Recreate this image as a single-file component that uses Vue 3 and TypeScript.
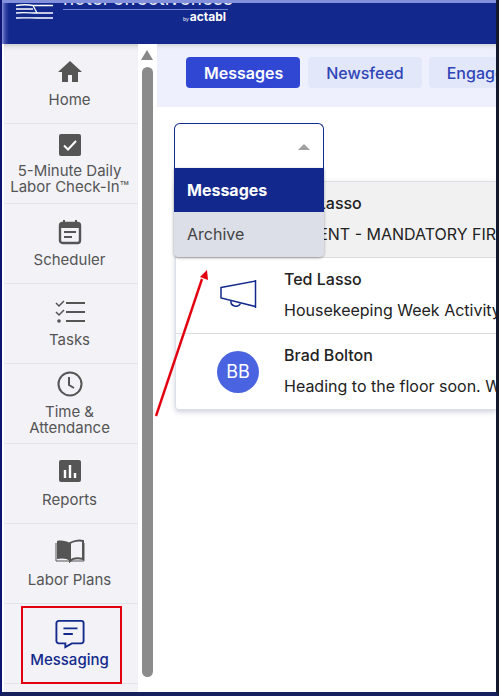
<script setup lang="ts">
interface Row {
  name: string;
  text: string;
  kind: string;
}

const rows: Row[] = [
  { name: "Ted Lasso", text: "URGENT - MANDATORY FIRE DRILL TODAY", kind: "none" },
  { name: "Ted Lasso", text: "Housekeeping Week Activity Schedule", kind: "horn" },
  { name: "Brad Bolton", text: "Heading to the floor soon. Who needs help?", kind: "avatar" },
];

const tabs = ["Messages", "Newsfeed", "Engagement"];
</script>

<template>
  <div class="frame">
    <header class="top">
      <div class="flag">
        <svg width="38" height="16" viewBox="0 0 38 16">
          <path d="M0 1.500c6-1 12-1 17 0h20M0 5h17M0 9c8-1 14 0 21 0h16M0 14c8-.500 14 0 21 0h16M17 1.500 21 9" fill="none" stroke="#fff" stroke-width="1.300" />
        </svg>
      </div>
      <div class="brand">
        <div class="brand-name">hotel effectiveness</div>
        <div class="brand-by"><small>by</small>actabl</div>
      </div>
    </header>

    <div class="body">
      <nav class="side">
        <a class="item tall">
          <svg width="26" height="24" viewBox="0 0 26 24"><path d="M13 2 1 13h4v10h6v-7h4v7h6V13h4z" fill="#555" /></svg>
          <span>Home</span>
        </a>
        <a class="item check">
          <svg width="24" height="24" viewBox="0 0 24 24"><rect x="1" y="1" width="22" height="22" rx="2" fill="#555" /><path d="m6 12.5 4 4 8-8.500" fill="none" stroke="#fff" stroke-width="2" /></svg>
          <span>5-Minute Daily<br />Labor Check-In™</span>
        </a>
        <a class="item">
          <svg width="24" height="26" viewBox="0 0 24 26"><path d="M6 1v3M18 1v3" stroke="#555" stroke-width="2" /><rect x="2" y="4" width="20" height="20" rx="2.500" fill="none" stroke="#555" stroke-width="2.400" /><rect x="2" y="4" width="20" height="5" fill="#555" /><path d="M6 13h12M6 18h8" stroke="#555" stroke-width="2" /></svg>
          <span>Scheduler</span>
        </a>
        <a class="item">
          <svg width="32" height="26" viewBox="0 0 32 26"><path d="m2 4 3 3 5-5M2 13l3 3 5-5" fill="none" stroke="#555" stroke-width="1.500" /><circle cx="5" cy="22" r="1.800" fill="#555" /><path d="M12 4h19M12 13h19M12 22h19" stroke="#555" stroke-width="2" /></svg>
          <span>Tasks</span>
        </a>
        <a class="item">
          <svg width="26" height="26" viewBox="0 0 26 26"><circle cx="13" cy="13" r="11.500" fill="none" stroke="#555" stroke-width="2" /><path d="M12 6v8l5 3" fill="none" stroke="#555" stroke-width="2" /></svg>
          <span>Time &amp;<br />Attendance</span>
        </a>
        <a class="item tall">
          <svg width="24" height="24" viewBox="0 0 24 24"><rect x="1" y="1" width="22" height="22" rx="2" fill="#555" /><path d="M7 11v8M12 6v13M17 14v5" stroke="#fff" stroke-width="2.400" /></svg>
          <span>Reports</span>
        </a>
        <a class="item tall">
          <svg width="30" height="24" viewBox="0 0 30 24"><path d="M15 4C12 2 6 1 2 2v18c4-1 10-1 13 2z" fill="#555" /><path d="M15 4c3-2 9-3 13-2v18c-4-1-10-1-13 2z" fill="none" stroke="#555" stroke-width="2" /><path d="M1 4v18h28V4" fill="none" stroke="#555" stroke-width="1" /></svg>
          <span>Labor Plans</span>
        </a>
        <a class="item active">
          <svg width="30" height="30" viewBox="0 0 32 32"><path d="M4 2h24a2.500 2.500 0 0 1 2.500 2.500v19a2.500 2.500 0 0 1-2.500 2.500H18l-7 4v-4H4a2.500 2.500 0 0 1-2.500-2.500v-19A2.500 2.500 0 0 1 4 2z" fill="none" stroke="#132a8c" stroke-width="2" /><path d="M9 10h15M9 16h10" stroke="#132a8c" stroke-width="2" /></svg>
          <span>Messaging</span>
        </a>
      </nav>

      <div class="scroll">
        <div class="arrow"></div>
        <div class="thumb"></div>
      </div>

      <main class="main">
        <div class="tabs">
          <button v-for="(t, i) in tabs" :key="t" class="tab" :class="{ on: i === 0 }">{{ t }}</button>
        </div>

        <div class="content">
          <div class="select">
            <i class="caret"></i>
            <div class="menu">
              <div class="opt sel">Messages</div>
              <div class="opt">Archive</div>
            </div>
          </div>

          <div class="card">
            <div v-for="r in rows" :key="r.text" class="row" :class="{ first: r.kind === 'none' }">
              <div class="pic">
                <svg v-if="r.kind === 'horn'" width="37" height="28" viewBox="0 0 37 28">
                  <path d="M1 7.500 35.500 1v25.500L1 18zM35.500 0v28" fill="none" stroke="#132a8c" stroke-width="1.500" />
                  <path d="M11 21a5 4.500 0 0 0 9.500 2.500" fill="none" stroke="#132a8c" stroke-width="1.500" />
                </svg>
                <div v-if="r.kind === 'avatar'" class="avatar">BB</div>
              </div>
              <div class="txt">
                <div class="who">{{ r.name }}</div>
                <div class="msg">{{ r.text }}</div>
              </div>
            </div>
          </div>
        </div>
      </main>
    </div>

    <!-- red annotation marks -->
    <svg class="mark-arrow" width="60" height="150" viewBox="0 0 60 150">
      <path d="M4 146 50 9" stroke="#e3000f" stroke-width="2.400" fill="none" />
      <path d="M55 0 48 7l8 3z" fill="#e3000f" />
    </svg>
    <div class="mark-box"></div>
  </div>
</template>

<style>
html,
body {
  margin: 0;
  background: #fff;
}
</style>

<style scoped>
.frame {
  position: relative;
  width: 499px;
  height: 696px;
  overflow: hidden;
  box-sizing: border-box;
  display: flex;
  flex-direction: column;
  font-family: Inter, "Liberation Sans", sans-serif;
  background: #fff;
  border-left: 2px solid #0e1572;
  border-right: 3px solid #16182c;
  border-bottom: 4px solid #16205f;
}
.top {
  height: 44px;
  flex: none;
  box-sizing: border-box;
  background: linear-gradient(90deg, #8391dc 0, #3a4aa8 3px, #12288c 7px);
  border-top: 3px solid #8391dc;
  display: flex;
  padding-left: 14px;
  overflow: hidden;
  position: relative;
  z-index: 2;
}
.flag {
  height: 16px;
  margin-top: 1px;
}
.brand {
  margin-left: 9px;
  width: 165px;
  color: #fff;
  margin-top: -15px;
}
.brand-name {
  font-size: 19px;
  line-height: 21px;
  height: 21px;
  white-space: nowrap;
  border-bottom: 1px solid #8391dc;
  text-align: center;
  opacity: 0.9;
}
.brand-by {
  text-align: right;
  font-size: 12px;
  font-weight: 700;
  line-height: 14px;
  padding-right: 2px;
}
.brand-by small {
  font-size: 5px;
  font-weight: 400;
  margin-right: 1px;
}
.body {
  flex: 1;
  display: flex;
  min-height: 0;
}
.side {
  width: 134px;
  flex: none;
  margin-left: 2px;
  background: #f2f2f7;
  box-shadow: inset 0 6px 6px -6px #aaa;
}
.item {
  height: 80px;
  box-sizing: border-box;
  padding: 0 3px 0 0;
  border-bottom: 1px solid #e3e3e8;
  display: flex;
  flex-direction: column;
  align-items: center;
  justify-content: center;
  gap: 7px;
  color: #555;
  font-size: 15px;
  line-height: 16px;
  text-align: center;
}
.item.tall {
  gap: 9px;
}
.item.check {
  gap: 6px;
  padding-top: 1px;
}
.item.active {
  color: #132a8c;
  font-weight: 500;
  gap: 3px;
}
.scroll {
  width: 19px;
  flex: none;
  position: relative;
}
.arrow {
  position: absolute;
  left: 3px;
  top: 6px;
  border: 6.500px solid transparent;
  border-top: 0;
  border-bottom: 10px solid #888;
}
.thumb {
  position: absolute;
  left: 4px;
  top: 23px;
  width: 11px;
  height: 610px;
  border-radius: 6px;
  background: #8b8b8b;
}
.main {
  flex: 1;
  min-width: 0;
}
.tabs {
  height: 63px;
  box-sizing: border-box;
  background: #eef0fd;
  padding: 13px 0 0 29px;
  display: flex;
  gap: 8px;
  overflow: hidden;
  box-shadow: inset 0 6px 6px -6px #bbb;
}
.tab {
  flex: none;
  height: 31px;
  border: 0;
  border-radius: 4px;
  background: #e3e7fa;
  color: #2f45b8;
  font: 500 16px Inter, "Liberation Sans", sans-serif;
  padding: 0 18px;
}
.tab.on {
  background: #3047d4;
  color: #fff;
  font-weight: 600;
  padding: 0 17px 0 18px;
}
.tab:last-child {
  margin-left: -1px;
}
.content {
  position: relative;
  padding: 16px 0 0 17px;
}
.select {
  position: relative;
  width: 150px;
  height: 45px;
  box-sizing: border-box;
  border: 1px solid #132a8c;
  border-bottom: 0;
  border-radius: 6px 6px 0 0;
  background: #fff;
  z-index: 3;
}
.caret {
  position: absolute;
  right: 13px;
  top: 20px;
  border: 6px solid transparent;
  border-top: 0;
  border-bottom: 6px solid #a0a0a0;
}
.menu {
  position: absolute;
  left: -1px;
  top: 44px;
  width: 150px;
  border-radius: 0 0 5px 5px;
  overflow: hidden;
  box-shadow: 0 1px 3px rgba(0, 0, 0, 0.35);
}
.opt {
  height: 45px;
  box-sizing: border-box;
  padding-left: 13px;
  line-height: 44px;
  font-size: 16px;
  background: #dcdfe7;
  color: #444;
}
.opt.sel {
  height: 44px;
  background: #12288c;
  color: #fff;
  font-weight: 700;
}
.card {
  margin: 13px 0 0 1px;
  border: 1px solid #dcdfe7;
  border-right: 0;
  border-radius: 4px 0 0 4px;
  box-shadow: 0 2px 5px rgba(60, 70, 110, 0.25);
  overflow: hidden;
  white-space: nowrap;
}
.row {
  height: 76px;
  box-sizing: border-box;
  display: flex;
  border-bottom: 1px solid #dcdcdc;
}
.row:last-child {
  border-bottom: 0;
  height: 75px;
}
.row.first {
  background: #f1f1f1;
}
.pic {
  width: 108px;
  flex: none;
  display: flex;
  align-items: center;
  justify-content: center;
  padding: 0 1px 3px 17px;
  box-sizing: border-box;
}
.avatar {
  width: 42px;
  height: 42px;
  margin-top: 3px;
  border-radius: 50%;
  background: #4a63e0;
  color: #fff;
  font-size: 18px;
  line-height: 42px;
  text-align: center;
}
.txt {
  padding-top: 11px;
  color: #222;
  font-size: 16px;
  line-height: 20px;
}
.who {
  font-weight: 500;
}
.msg {
  margin-top: 11px;
}
.mark-arrow {
  position: absolute;
  left: 150px;
  top: 270px;
  z-index: 5;
}
.mark-box {
  position: absolute;
  left: 19px;
  top: 606px;
  width: 101px;
  height: 78px;
  box-sizing: border-box;
  border: 2px solid #e3000f;
  z-index: 5;
}
</style>
